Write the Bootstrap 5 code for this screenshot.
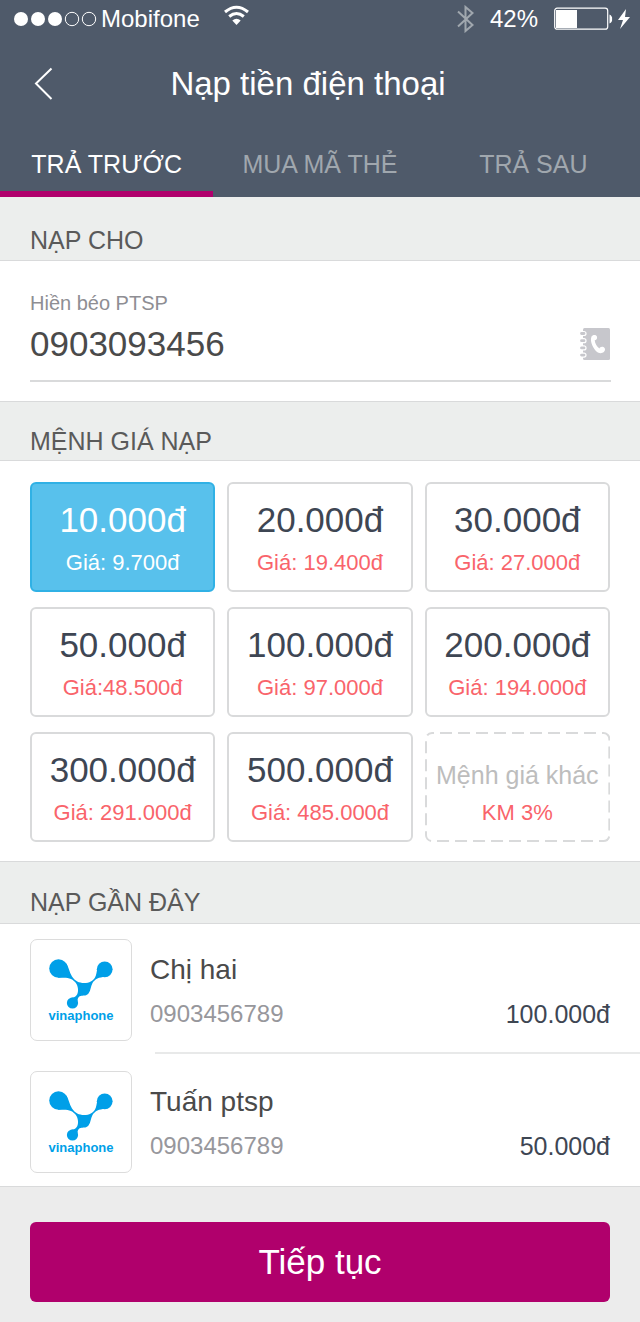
<!DOCTYPE html>
<html lang="vi">
<head>
<meta charset="utf-8">
<meta name="viewport" content="width=device-width, initial-scale=1">
<title>Nạp tiền điện thoại</title>
<link href="https://cdn.jsdelivr.net/npm/bootstrap@5.3.0/dist/css/bootstrap.min.css" rel="stylesheet">
<style>
:root{--slate:#4f5a6a;--magenta:#b0006c;--haze:#eceeed;--rule:#d9dadb}
body{font-family:"Liberation Sans",Arial,sans-serif;background:#ececec;color:#4a4a4a;line-height:1}
.topbar{background:var(--slate)}
.status-row{height:38px;font-size:24px;padding:0 10px 0 14px}
.title-row{height:92px}
.title-row h1{font-size:33px;line-height:40px}
.back-btn{left:20px;top:16px;width:48px;height:60px}
.tabs-row{height:67px}
.tabs-row .tab-link{font-size:25px;line-height:36px;color:#a0a7ae;padding:16px 0 9px;border-bottom:6px solid transparent;text-decoration:none}
.tabs-row .tab-link.active{color:#fff;border-color:var(--magenta)}
.band{background:var(--haze);border-bottom:1px solid var(--rule);font-size:25px;line-height:30px;padding:28px 30px 5px;color:#5a5a5a}
.band-mid{border-top:1px solid var(--rule);padding-top:24px;padding-bottom:4px}
.band-low{border-top:1px solid var(--rule);padding-top:25px;padding-bottom:6px}
.phone-panel{padding:30px 29px 19px 30px}
.phone-panel label{font-size:20px;line-height:24px;color:#8e8e93}
.phone-line{border-bottom:2px solid var(--rule);height:67px;padding-bottom:8px}
.phone-line input{font-size:35px;line-height:40px;color:#4a4a4a;min-width:0}
.amounts{display:grid;grid-template-columns:repeat(3,1fr);gap:15px 12px;padding:21px 30px 19px}
.amount{height:110px;border:2px solid var(--rule);border-radius:6px;color:#3e4653;font-size:35px;line-height:40px;padding-top:16px}
.amount small{font-size:22px;line-height:26px;margin-top:10px;color:#f9646b}
.btn-check:checked + .amount{background:#58c1ec;border-color:#30b1e5;color:#fff}
.btn-check:checked + .amount small{color:#fff}
.amount-other{border-color:transparent;color:#bdbdbd;font-size:25px;line-height:50px}
.amount-other small{margin-top:0}
.dash-frame rect{width:calc(100% - 2px);height:calc(100% - 2px)}
.recent-row{padding:15px 30px 0;height:128px;gap:18px}
.recent-row + .row-rule + .recent-row{padding-top:17px;height:132px}
.carrier{width:102px;height:102px;border:1px solid #dcdcdc;border-radius:7px}
.recent-row .who{font-size:28px;line-height:34px;padding-top:14px}
.recent-row .num{font-size:24px;line-height:30px;color:#97979c}
.recent-row .sum{font-size:25px;line-height:30px;color:#3e4653}
.row-rule{height:2px;background:#e8e9e9;margin-left:155px}
.recent-list{border-bottom:1px solid var(--rule)}
.go-area{padding:35px 30px 20px}
.btn-go{background:var(--magenta);color:#fff;font-size:35px;line-height:40px;height:80px;border-radius:6px;border:0}
.btn-go:hover{background:#98005d;color:#fff}
</style>
</head>
<body>
<header class="topbar text-white">
  <div class="status-row d-flex align-items-center">
    <svg width="83" height="16" viewBox="0 0 83 16" fill="#fff" aria-hidden="true"><circle cx="7" cy="8" r="7"/><circle cx="24" cy="8" r="7"/><circle cx="41" cy="8" r="7"/><g fill="none" stroke="#fff"><circle cx="58" cy="8" r="6.7"/><circle cx="75" cy="8" r="6.7"/></g></svg>
    <span class="ms-1">Mobifone</span>
    <svg class="ms-4 mb-2" width="25" height="21" viewBox="0 0 25 21" fill="none" stroke="#fff" stroke-width="3" aria-hidden="true"><path d="M1 7Q12.500-2.500 24 7M5.200 11.500Q12.500 5.500 19.800 11.500"/><path d="M8.300 15.500Q12.500 12 16.700 15.500L12.500 20Z" fill="#fff" stroke="none"/></svg>
    <svg class="ms-auto" width="17" height="28" viewBox="0 0 17 28" fill="none" stroke="#a0a7ae" stroke-width="2" aria-hidden="true"><path d="M1 6.500 15.500 20 8.500 26V2L15.500 8 1 21.500"/></svg>
    <span class="ms-3">42%</span>
    <svg class="ms-3" width="76" height="24" viewBox="0 0 76 24" aria-hidden="true"><rect x=".7" y="1.200" width="53" height="21" rx="2.500" fill="none" stroke="#fff" stroke-width="1.200"/><path d="M2 3h21v18H2zM55.500 7.500q3 1.500 2.600 4.500.4 3-2.600 4.500zM72 2 64 13h5l-3 9 10-12h-5z" fill="#fff"/></svg>
  </div>
  <div class="title-row position-relative d-flex align-items-center justify-content-center">
    <button type="button" class="back-btn btn p-0 position-absolute" aria-label="Quay lại"><svg width="20" height="34" viewBox="0 0 20 34" fill="none" stroke="#fff" stroke-width="2"><path d="M17.500 1.500 2 16.500 17.500 32"/></svg></button>
    <h1 class="m-0 fw-normal me-4">Nạp tiền điện thoại</h1>
  </div>
  <nav class="tabs-row d-flex text-center">
    <a href="#" class="tab-link active col-4" aria-current="page">TRẢ TRƯỚC</a>
    <a href="#" class="tab-link col-4">MUA MÃ THẺ</a>
    <a href="#" class="tab-link col-4">TRẢ SAU</a>
  </nav>
</header>
<main>
  <h2 class="band m-0 fw-normal">NẠP CHO</h2>
  <section class="phone-panel bg-white">
    <label for="phone" class="d-block">Hiền béo PTSP</label>
    <div class="phone-line d-flex align-items-center">
      <input id="phone" type="tel" class="flex-grow-1 border-0 p-0 bg-transparent" value="0903093456">
      <button type="button" class="btn p-0 border-0" aria-label="Danh bạ"><svg class="d-block" width="31" height="34" viewBox="0 0 31 34"><rect x="3" y="1" width="27" height="32" rx="1.500" fill="#c7c7cc"/><g fill="#c7c7cc" stroke="#fff" stroke-width="1.200"><rect x="-.5" y="4.500" width="6.500" height="4" rx="2"/><rect x="-.5" y="11.700" width="6.500" height="4" rx="2"/><rect x="-.5" y="18.900" width="6.500" height="4" rx="2"/><rect x="-.5" y="26.100" width="6.500" height="4" rx="2"/></g><path d="M11.500 9.500C12.500 7.500 16.500 7.300 17 9.800s-.8 3.200-2.300 3.500c.3 3.200 2.300 6.500 4.800 8.200.3-1.500 2-2.300 4-1.500s2 3.500.3 5-5 1.700-7.300-.5-7.300-9.500-5-15Z" fill="#fff"/></svg></button>
    </div>
  </section>
  <h2 class="band band-mid m-0 fw-normal">MỆNH GIÁ NẠP</h2>
  <section class="amounts bg-white">
    <div><input class="btn-check" type="radio" name="amount" id="a10" checked><label class="amount d-block text-center" for="a10">10.000đ<small class="d-block">Giá: 9.700đ</small></label></div>
    <div><input class="btn-check" type="radio" name="amount" id="a20"><label class="amount d-block text-center" for="a20">20.000đ<small class="d-block">Giá: 19.400đ</small></label></div>
    <div><input class="btn-check" type="radio" name="amount" id="a30"><label class="amount d-block text-center" for="a30">30.000đ<small class="d-block">Giá: 27.000đ</small></label></div>
    <div><input class="btn-check" type="radio" name="amount" id="a50"><label class="amount d-block text-center" for="a50">50.000đ<small class="d-block">Giá:48.500đ</small></label></div>
    <div><input class="btn-check" type="radio" name="amount" id="a100"><label class="amount d-block text-center" for="a100">100.000đ<small class="d-block">Giá: 97.000đ</small></label></div>
    <div><input class="btn-check" type="radio" name="amount" id="a200"><label class="amount d-block text-center" for="a200">200.000đ<small class="d-block">Giá: 194.000đ</small></label></div>
    <div><input class="btn-check" type="radio" name="amount" id="a300"><label class="amount d-block text-center" for="a300">300.000đ<small class="d-block">Giá: 291.000đ</small></label></div>
    <div><input class="btn-check" type="radio" name="amount" id="a500"><label class="amount d-block text-center" for="a500">500.000đ<small class="d-block">Giá: 485.000đ</small></label></div>
    <div class="position-relative">
      <svg class="dash-frame position-absolute top-0 start-0 w-100 h-100 pe-none" aria-hidden="true"><rect x="1" y="1" rx="6" fill="none" stroke="#d9dadb" stroke-width="2" stroke-dasharray="12 6" stroke-dashoffset="-8"/></svg>
      <input class="btn-check" type="radio" name="amount" id="aother"><label class="amount amount-other d-block text-center" for="aother">Mệnh giá khác<small class="d-block">KM 3%</small></label>
    </div>
  </section>
  <h2 class="band band-low m-0 fw-normal">NẠP GẦN ĐÂY</h2>
  <section class="recent-list bg-white">
    <div class="recent-row d-flex">
      <svg class="carrier flex-shrink-0" viewBox="0 0 100 100" role="img" aria-label="vinaphone"><g id="vina" fill="#009fe8"><circle cx="27.500" cy="28.500" r="9.300"/><circle cx="73.700" cy="29.300" r="7.900"/><circle cx="41.500" cy="63" r="5.600"/><path d="M35 23C38 27 38 32 41 36.500 44 41 48 43 53 43 58.500 43 62 41 64 37.500 65.500 35 65.500 32 66.500 28L74 37C68 37 64 39 61.500 43 59.500 46.500 60 50 57.500 53.500 55.500 56 53 55.500 50.500 55.700 47.500 56 46.500 58 46.500 61L39 58C44 57.500 46.500 56 47 51 47.500 45 44 41 40 39 36 37 31 38 27 37.800Z"/><text x="50" y="80" text-anchor="middle" font-size="13" font-weight="bold">vinaphone</text></g></svg>
      <div class="flex-grow-1">
        <div class="who">Chị hai</div>
        <div class="d-flex justify-content-between mt-2 pt-1"><span class="num">0903456789</span><span class="sum">100.000đ</span></div>
      </div>
    </div>
    <div class="row-rule"></div>
    <div class="recent-row d-flex">
      <svg class="carrier flex-shrink-0" viewBox="0 0 100 100" role="img" aria-label="vinaphone"><use href="#vina"/></svg>
      <div class="flex-grow-1">
        <div class="who">Tuấn ptsp</div>
        <div class="d-flex justify-content-between mt-2 pt-1"><span class="num">0903456789</span><span class="sum">50.000đ</span></div>
      </div>
    </div>
  </section>
  <div class="go-area"><button type="button" class="btn btn-go w-100">Tiếp tục</button></div>
</main>
<script src="https://cdn.jsdelivr.net/npm/bootstrap@5.3.0/dist/js/bootstrap.bundle.min.js"></script>
</body>
</html>
